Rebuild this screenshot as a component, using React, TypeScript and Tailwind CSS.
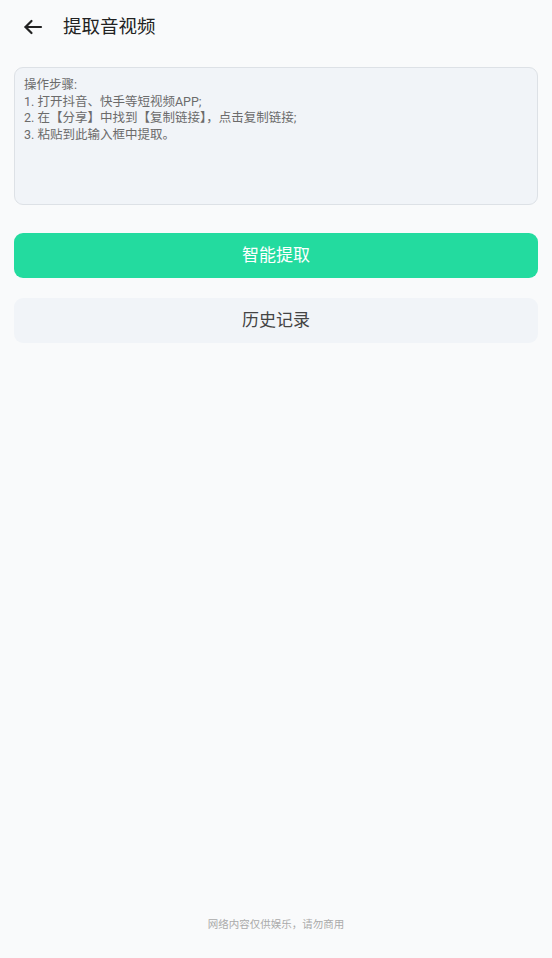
import React, { useState } from 'react';

const steps = `操作步骤:
1. 打开抖音、快手等短视频APP;
2. 在【分享】中找到【复制链接】，点击复制链接;
3. 粘贴到此输入框中提取。`;

export default function App() {
    const [link, setLink] = useState('');

    return (
        <div
            className="min-h-[958px] bg-[#f9fafb] flex flex-col"
            style={{ fontFamily: 'Roboto, "Noto Sans CJK SC", "Noto Sans", sans-serif' }}
        >
            {/* header */}
            <header className="h-[54px] flex items-center pl-[23px]">
                <button className="w-5 h-5 flex items-center justify-center text-[#222]">
                    <svg width="20" height="16" viewBox="0 0 20 16" fill="none" stroke="currentColor" strokeWidth="2.2" strokeLinecap="round" strokeLinejoin="round">
                        <path d="M18 8H2.5" />
                        <path d="M8.5 2L2.5 8l6 6" />
                    </svg>
                </button>
                <h1 className="ml-[20px] text-[18.5px] text-[#222] leading-none">提取音视频</h1>
            </header>

            <main className="px-[14px] pt-[13px] flex flex-col">
                <textarea
                    value={link}
                    onChange={(e) => setLink(e.target.value)}
                    placeholder={steps}
                    className="h-[138px] w-full resize-none rounded-[9px] border border-[#dde1e6] bg-[#f1f4f8] px-[9px] py-[9px] text-[12.5px] leading-[16.5px] text-[#555] placeholder:text-[#6b6b6b] focus:outline-none"
                />

                <button className="mt-[28px] h-[45px] w-full rounded-[9px] bg-[#23db9f] text-white text-[17px] leading-none">
                    智能提取
                </button>

                <button className="mt-[20px] h-[45px] w-full rounded-[9px] bg-[#f1f4f8] text-[#444] text-[17px] leading-none">
                    历史记录
                </button>
            </main>

            <footer className="mt-auto pb-[25px] text-center text-[10.5px] text-[#aaa]">
                网络内容仅供娱乐，请勿商用
            </footer>
        </div>
    );
}
